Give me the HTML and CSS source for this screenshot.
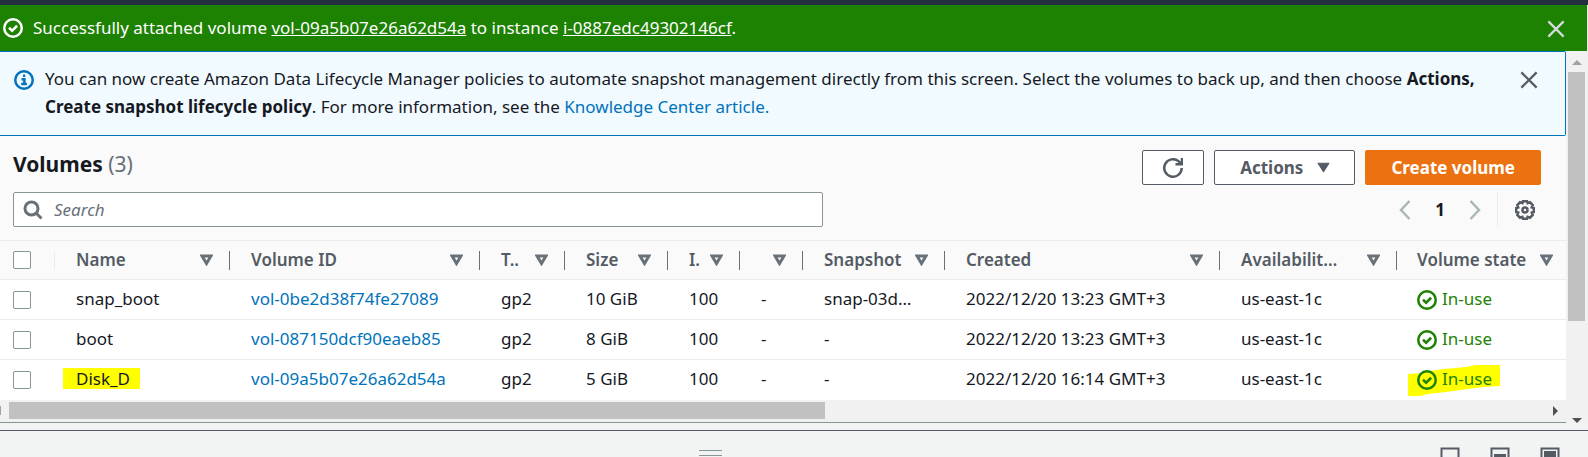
FILE: index.html
```html
<!DOCTYPE html>
<html lang="en">
<head>
<meta charset="utf-8">
<title>Volumes</title>
<link rel="stylesheet" href="styles.css">
</head>
<body>
<svg class="defs" aria-hidden="true">
  <symbol id="check" viewBox="0 0 16 16"><circle cx="8" cy="8" r="7"/><path d="M4.8 7.8 7.3 10.2 11.3 6.2"/></symbol>
  <symbol id="close" viewBox="0 0 16 16"><path d="M1.2 1.200 14.8 14.8M14.8 1.200 1.2 14.8"/></symbol>
  <symbol id="sort" viewBox="0 0 13 12"><path d="M2 2H11L6.5 9.500Z"/></symbol>
</svg>
<div class="page">
  <div class="topbar"></div>
  <div class="flash" role="status">
    <svg class="icon"><use href="#check"/></svg>
    <p class="flash-text">Successfully attached volume <a href="#vol">vol-09a5b07e26a62d54a</a> to instance <a href="#instance">i-0887edc49302146cf</a>.</p>
    <button class="plain" aria-label="Dismiss"><svg class="close-icon"><use href="#close"/></svg></button>
  </div>
  <div class="body">
    <main class="content">
      <section class="info">
        <svg class="icon" viewBox="0 0 16 16"><circle cx="8" cy="8" r="7"/><path d="M6 7.3H8.3V11M5.8 11.2H10.3M7.2 4.6H9"/></svg>
        <p class="info-text">You can now create Amazon Data Lifecycle Manager policies to automate snapshot management directly from this screen. Select the volumes to back up, and then choose <b>Actions,</b> <b>Create snapshot lifecycle policy</b>. For more information, see the <a href="#article">Knowledge Center article.</a></p>
        <button class="plain" aria-label="Close"><svg class="close-icon"><use href="#close"/></svg></button>
      </section>
      <header class="header">
        <div class="title-row">
          <h1>Volumes <span>(3)</span></h1>
          <div class="actions">
            <button class="btn refresh" aria-label="Refresh"><svg class="icon" viewBox="0 0 16 16"><path d="M15 8A7 7 0 1 1 12.600 2.700L14.500 4.500M15.200 0V5H10"/></svg></button>
            <button class="btn menu">Actions <svg class="caret" viewBox="0 0 12 10"><path d="M1 1H11L6 9Z"/></svg></button>
            <button class="btn primary">Create volume</button>
          </div>
        </div>
        <div class="tools">
          <label class="search">
            <svg class="icon" viewBox="0 0 20 20"><circle cx="8.500" cy="8.500" r="6.500"/><path d="M13 13 18.500 18.500"/></svg>
            <input type="search" placeholder="Search" aria-label="Search">
          </label>
          <nav class="pager">
            <button class="plain" aria-label="Previous page"><svg class="chevron" viewBox="0 0 12 20"><path d="M10.5 1 2 10 10.5 19"/></svg></button>
            <b>1</b>
            <button class="plain" aria-label="Next page"><svg class="chevron" viewBox="0 0 12 20"><path d="M1.5 1 10 10 1.5 19"/></svg></button>
            <button class="plain settings" aria-label="Preferences"><svg class="icon" viewBox="0 0 20 20"><path d="M8 1.2H12L12.6 3.2 15 2.3 17.7 5 16.8 7.4 18.8 8V12L16.8 12.6 17.7 15 15 17.7 12.6 16.8 12 18.8H8L7.4 16.8 5 17.7 2.3 15 3.2 12.6 1.2 12V8L3.2 7.4 2.3 5 5 2.3 7.4 3.2Z"/><circle cx="10" cy="10" r="2.5"/></svg></button>
          </nav>
        </div>
      </header>
      <table>
        <colgroup><col class="c-check"><col class="c-name"><col class="c-id"><col class="c-type"><col class="c-size"><col class="c-iops"><col class="c-thr"><col class="c-snap"><col class="c-created"><col class="c-zone"><col class="c-state"></colgroup>
        <thead>
          <tr>
            <th class="pick"><input type="checkbox" aria-label="Select all"></th>
            <th><div class="head"><span>Name</span><svg><use href="#sort"/></svg></div></th>
            <th><div class="head"><span>Volume ID</span><svg><use href="#sort"/></svg></div></th>
            <th><div class="head"><span>T..</span><svg><use href="#sort"/></svg></div></th>
            <th><div class="head"><span>Size</span><svg><use href="#sort"/></svg></div></th>
            <th><div class="head"><span>I.</span><svg><use href="#sort"/></svg></div></th>
            <th><div class="head"><span></span><svg><use href="#sort"/></svg></div></th>
            <th><div class="head"><span>Snapshot</span><svg><use href="#sort"/></svg></div></th>
            <th><div class="head"><span>Created</span><svg><use href="#sort"/></svg></div></th>
            <th><div class="head"><span>Availabilit…</span><svg><use href="#sort"/></svg></div></th>
            <th><div class="head"><span>Volume state</span><svg><use href="#sort"/></svg></div></th>
          </tr>
        </thead>
        <tbody>
          <tr>
            <td class="pick"><input type="checkbox" aria-label="Select snap_boot"></td>
            <td>snap_boot</td><td><a href="#v1">vol-0be2d38f74fe27089</a></td><td>gp2</td><td>10 GiB</td><td>100</td><td>-</td><td>snap-03d…</td><td>2022/12/20 13:23 GMT+3</td><td>us-east-1c</td>
            <td><span class="state"><svg class="icon"><use href="#check"/></svg>In-use</span></td>
          </tr>
          <tr>
            <td class="pick"><input type="checkbox" aria-label="Select boot"></td>
            <td>boot</td><td><a href="#v2">vol-087150dcf90eaeb85</a></td><td>gp2</td><td>8 GiB</td><td>100</td><td>-</td><td>-</td><td>2022/12/20 13:23 GMT+3</td><td>us-east-1c</td>
            <td><span class="state"><svg class="icon"><use href="#check"/></svg>In-use</span></td>
          </tr>
          <tr>
            <td class="pick"><input type="checkbox" aria-label="Select Disk_D"></td>
            <td><span class="marked">Disk_D</span></td><td><a href="#v3">vol-09a5b07e26a62d54a</a></td><td>gp2</td><td>5 GiB</td><td>100</td><td>-</td><td>-</td><td>2022/12/20 16:14 GMT+3</td><td>us-east-1c</td>
            <td><span class="state"><svg class="stroke" viewBox="0 0 92 31"><path d="M0 9 9 8.500 15 7 36 4 58 2 68 0H92V21L76 22 60 24 38 27 20 29 12 31H0Z"/></svg><svg class="icon"><use href="#check"/></svg>In-use</span></td>
          </tr>
        </tbody>
      </table>
      <div class="hscroll"><i class="left"></i><div class="hthumb"></div><i class="right"></i></div>
    </main>
    <div class="vscroll"><i class="up"></i><div class="vthumb"></div><i class="down"></i></div>
  </div>
  <footer class="panel">
    <div class="grip"></div>
    <div class="sizes">
      <button class="plain" aria-label="Small panel"><svg viewBox="0 0 20 20"><path d="M1.500 1.500H18.500V18.500H1.500Z"/></svg></button>
      <button class="plain" aria-label="Medium panel"><svg viewBox="0 0 20 20"><path d="M1.500 1.500H18.500V18.500H1.500Z"/><path class="solid" d="M4 7H16V16H4Z"/></svg></button>
      <button class="plain" aria-label="Large panel"><svg viewBox="0 0 20 20"><path d="M1.500 1.500H18.500V18.500H1.500Z"/><path class="solid" d="M4 4H16V16H4Z"/></svg></button>
    </div>
  </footer>
</div>
</body>
</html>
```
FILE: styles.css
```css
* { box-sizing: border-box; }
body {
  margin: 0;
  overflow: hidden;
  background: #f2f3f3;
  color: #16191f;
  font: 17px/28px "Noto Sans", "Open Sans", sans-serif;
}
p, h1 { margin: 0; }
a { color: #0073bb; text-decoration: none; }
svg { display: block; flex: none; fill: none; stroke: currentColor; stroke-width: 2; }
.defs { position: absolute; width: 0; height: 0; }
.icon { width: 20px; height: 20px; }
.close-icon { width: 18px; height: 18px; }
.plain { display: block; flex: none; padding: 0; border: 0; background: none; color: #545b64; cursor: pointer; }
.page { height: 100vh; overflow: hidden; }
.topbar { height: 5px; background: #232f3e; }

.flash {
  display: flex;
  align-items: center;
  gap: 10px;
  height: 46px;
  margin-right: 1px;
  padding: 0 22px 0 3px;
  background: #1d8102;
  color: #fff;
}
.flash-text { flex: 1; }
.flash a { color: inherit; text-decoration: underline; }
.flash .plain { margin-top: 2px; color: #d5dbdb; }

.body { display: flex; }
.content { flex: 1; min-width: 0; }
.info {
  display: flex;
  align-items: flex-start;
  padding: 13px 27px 14px 14px;
  border: 1px solid #0073bb;
  border-left: 0;
  border-radius: 0 2px 2px 0;
  background: #f1faff;
}
.info .icon { margin-top: 5px; margin-right: 11px; color: #0073bb; }
.info-text { flex: 1; }
.info .plain { margin-top: 6px; margin-left: 20px; }

.header { padding: 14px 25px 13px 13px; background: #fafafa; }
.title-row { display: flex; justify-content: space-between; }
h1 { font-size: 21px; line-height: 28px; font-weight: 700; }
h1 span { color: #687078; font-weight: 400; }
.actions { display: flex; gap: 10px; }
.btn {
  display: flex;
  align-items: center;
  justify-content: center;
  height: 35px;
  padding: 0 25px;
  border: 1px solid #545b64;
  border-radius: 2px;
  background: #fff;
  color: #545b64;
  font: 700 17px/28px "Noto Sans", "Open Sans", sans-serif;
  cursor: pointer;
}
.refresh { padding: 0 20px; }
.menu { gap: 14px; padding: 0 24px 0 25px; }
.caret { width: 13px; height: 11px; fill: currentColor; stroke-linejoin: round; stroke-width: 1; }
.primary { border-color: #ec7211; background: #ec7211; color: #fff; }
.tools { display: flex; align-items: center; justify-content: space-between; margin-top: 7px; }
.search {
  display: flex;
  align-items: center;
  gap: 11px;
  width: 810px;
  height: 35px;
  padding: 0 10px 0 9px;
  border: 1px solid #879596;
  border-radius: 2px;
  background: #fff;
}
.search .icon { color: #687078; stroke-width: 3; }
.search input { flex: 1; min-width: 0; padding: 0; border: 0; outline: 0; background: none; font: inherit; }
.search input::placeholder { color: #687078; font-style: italic; opacity: 1; }
.pager { display: flex; align-items: center; height: 35px; padding-right: 6px; }
.pager b { width: 58px; text-align: center; font-weight: 700; }
.pager .plain { color: #aab7b8; }
.chevron { width: 12px; height: 20px; stroke-width: 2.5; }
.pager .settings { height: 35px; margin-left: 16px; padding-left: 17px; border-left: 1px solid #eaeded; color: #545b64; }
.settings .icon { stroke-width: 2.5; }

table { width: 100%; border-collapse: separate; border-spacing: 0; table-layout: fixed; background: #fff; }
.c-check { width: 55px; }
.c-name { width: 175px; }
.c-id { width: 250px; }
.c-type { width: 85px; }
.c-size { width: 103px; }
.c-iops { width: 72px; }
.c-thr { width: 63px; }
.c-snap { width: 142px; }
.c-zone { width: 177px; }
.c-state { width: 169px; }
th, td { height: 40px; padding: 0 0 0 21px; text-align: left; white-space: nowrap; }
th { border-top: 1px solid #eaeded; border-bottom: 1px solid #eaeded; background: #fafafa; color: #545b64; font-weight: 600; }
td { padding-bottom: 2px; border-bottom: 1px solid #eaeded; }
tr:last-child td { border-bottom-color: transparent; }
.head { display: flex; align-items: center; height: 19px; padding-right: 16px; border-right: 1px solid #687078; }
.head span { flex: 1; min-width: 0; line-height: 17px; margin-bottom: 2px; }
.head svg { width: 13px; height: 12px; color: #687078; stroke-width: 3; }
th:last-child .head { padding-right: 13px; border-right: 0; }
td:last-child, th:last-child { padding-left: 20px; }
td.pick, th.pick { padding: 0 0 0 13px; }
th.pick { background: linear-gradient(#eaeded, #eaeded) right center / 1px 19px no-repeat #fafafa; }
.pick input {
  display: block;
  appearance: none;
  width: 18px;
  height: 18px;
  margin: 0;
  border: 1px solid #879596;
  border-radius: 2px;
  background: #fff;
}
.state { position: relative; z-index: 0; display: flex; align-items: center; gap: 5px; color: #1d8102; }
.state .icon { margin-top: 2px; }
.stroke { position: absolute; z-index: -1; top: 0; left: -9px; width: 92px; height: 31px; fill: #ff0; stroke: none; }
.marked { display: inline-block; margin-left: -13px; padding: 0 10px 0 13px; background: #ff0; line-height: 21px; }

.hscroll { display: flex; align-items: center; height: 23px; padding: 0 8px 1px 0; border-bottom: 1px solid #879596; background: #f1f1f1; }
.hthumb { width: 816px; height: 17px; margin-left: 8px; background: #c1c1c1; }
.left { width: 1px; height: 9px; background: #a3a3a3; }
.right { margin-left: auto; border: 5px solid transparent; border-left-color: #505050; border-right: 0; }
.vscroll { display: flex; flex-direction: column; align-items: center; width: 22px; padding-right: 1px; background: #f1f1f1; }
.up { margin: 9px 0 7px; border: 5px solid transparent; border-top: 0; border-bottom-color: #a3a3a3; }
.vthumb { width: 17px; height: 249px; background: #c1c1c1; }
.down { margin-top: auto; border: 5px solid transparent; border-top-color: #505050; border-bottom: 0; }

.panel { margin-top: 7px; border-top: 1px solid #545b64; padding: 16px 28px; display: grid; grid-template-columns: 4fr auto 5fr; }
.grip { width: 23px; height: 6px; margin-top: 3px; border: 1px solid #879596; border-width: 1px 0; }
.sizes { display: flex; justify-content: flex-end; gap: 30px; color: #545b64; }
.sizes svg { width: 20px; height: 20px; stroke-width: 2; }
.grip { grid-column: 2; }
.solid { fill: currentColor; stroke: none; }
```
